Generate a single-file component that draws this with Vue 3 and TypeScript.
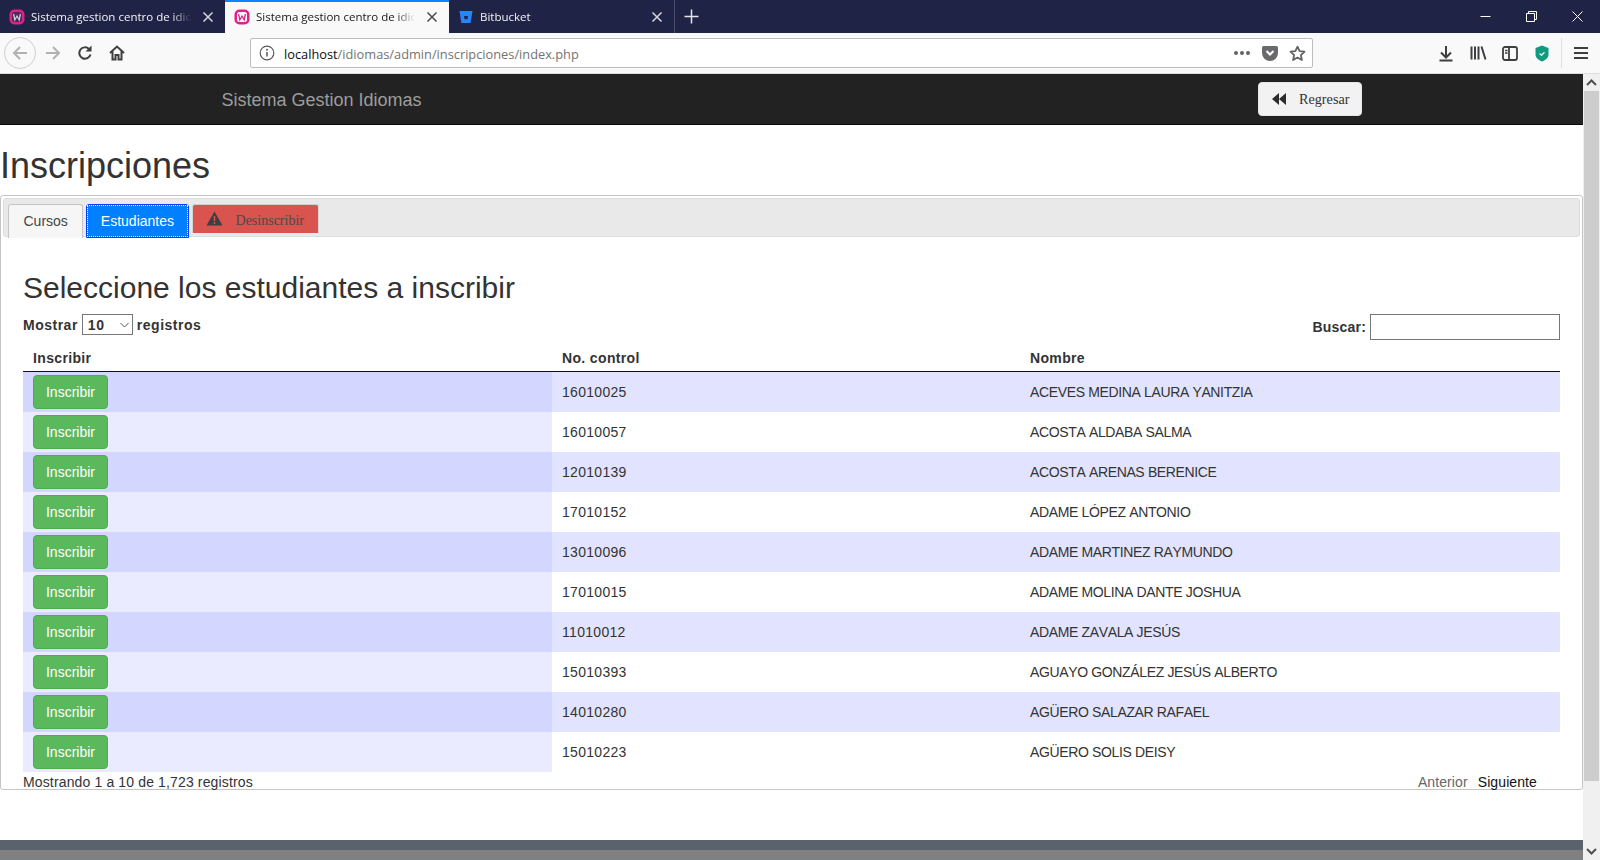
<script setup lang="ts">
const tabs = [
  { title: 'Sistema gestion centro de idiomas', icon: 'wamp', active: false },
  { title: 'Sistema gestion centro de idiomas', icon: 'wamp', active: true },
  { title: 'Bitbucket', icon: 'bitbucket', active: false },
];

const rows = [
  ['16010025', 'ACEVES MEDINA LAURA YANITZIA'],
  ['16010057', 'ACOSTA ALDABA SALMA'],
  ['12010139', 'ACOSTA ARENAS BERENICE'],
  ['17010152', 'ADAME LÓPEZ ANTONIO'],
  ['13010096', 'ADAME MARTINEZ RAYMUNDO'],
  ['17010015', 'ADAME MOLINA DANTE JOSHUA'],
  ['11010012', 'ADAME ZAVALA JESÚS'],
  ['15010393', 'AGUAYO GONZÁLEZ JESÚS ALBERTO'],
  ['14010280', 'AGÜERO SALAZAR RAFAEL'],
  ['15010223', 'AGÜERO SOLIS DEISY'],
];
</script>

<template>
  <div class="browser">
    <div class="tabstrip">
      <div v-for="(tab, i) in tabs" :key="i" class="tab" :class="{ 'tab--active': tab.active }">
        <svg v-if="tab.icon === 'wamp'" class="favicon" viewBox="0 0 16 16">
          <rect x="0.5" y="0.5" width="15" height="15" rx="5" fill="#e0218a" />
          <rect x="3" y="3" width="10" height="10" rx="2.5" :fill="tab.active ? '#fff' : '#4a2a5c'" />
          <path d="M4.6 5l1.2 6 2.2-4 2.2 4 1.2-6" fill="none" :stroke="tab.active ? '#e0218a' : '#d8c8dc'" stroke-width="1.3" />
        </svg>
        <svg v-else class="favicon" viewBox="0 0 16 16">
          <path d="M1.5 2h13l-1.9 12H3.4z" fill="#2684ff" />
          <path d="M6 7h4l-.6 3.2H6.6z" fill="#1f2447" />
        </svg>
        <span class="tab__title">{{ tab.title }}</span>
        <svg class="tab__close" viewBox="0 0 12 12">
          <path d="M1.5 1.5l9 9M10.5 1.5l-9 9" fill="none" stroke="currentColor" stroke-width="1.5" />
        </svg>
      </div>
      <div class="newtab">
        <svg width="15" height="15" viewBox="0 0 15 15">
          <path d="M7.5 0.5v14M0.5 7.5h14" stroke="#e4e5ea" stroke-width="1.5" fill="none" />
        </svg>
      </div>
      <div class="winctl">
        <span class="winctl__btn">
          <svg width="11" height="11" viewBox="0 0 11 11"><path d="M0.5 5.5h10" stroke="#fff" /></svg>
        </span>
        <span class="winctl__btn">
          <svg width="11" height="11" viewBox="0 0 11 11">
            <path d="M0.5 2.5h8v8h-8zM2.5 2.5v-2h8v8h-2" fill="none" stroke="#fff" />
          </svg>
        </span>
        <span class="winctl__btn">
          <svg width="11" height="11" viewBox="0 0 11 11"><path d="M0.5 0.5l10 10M10.5 0.5l-10 10" stroke="#fff" /></svg>
        </span>
      </div>
    </div>

    <div class="toolbar">
      <span class="backbtn">
        <svg width="18" height="18" viewBox="0 0 18 18">
          <path d="M16 9H3M9 3L3 9l6 6" fill="none" stroke="#b1b1b3" stroke-width="2" />
        </svg>
      </span>
      <svg class="tool tool--fwd" width="18" height="18" viewBox="0 0 18 18">
        <path d="M2 9h13M9 3l6 6-6 6" fill="none" stroke="#b1b1b3" stroke-width="2" />
      </svg>
      <svg class="tool tool--reload" width="16" height="16" viewBox="0 0 16 16">
        <path d="M13.5 9.5A5.7 5.7 0 1 1 12 4" fill="none" stroke="#3f3f41" stroke-width="2" />
        <path d="M14.5 0.5v6h-6z" fill="#3f3f41" />
      </svg>
      <svg class="tool tool--home" width="16" height="16" viewBox="0 0 16 16">
        <path d="M1 8l7-6.5L15 8M3.5 6.5V14.500h3V10h3v4.500h3V6.500" fill="none" stroke="#3f3f41" stroke-width="2" />
      </svg>
      <div class="urlbar">
        <svg class="urlbar__info" width="16" height="16" viewBox="0 0 16 16">
          <circle cx="8" cy="8" r="6.8" fill="none" stroke="#5a5a5c" stroke-width="1.2" />
          <path d="M8 7v4.500" stroke="#5a5a5c" stroke-width="1.5" />
          <circle cx="8" cy="4.800" r="1" fill="#5a5a5c" />
        </svg>
        <span class="urlbar__text"><b>localhost</b>/idiomas/admin/inscripciones/index.php</span>
        <span class="urlbar__dots"><i /><i /><i /></span>
        <svg class="urlbar__pocket" width="16" height="15" viewBox="0 0 16 15">
          <path d="M1.500 0h13A1.500 1.500 0 0 1 16 1.500V7a8 8 0 0 1-16 0V1.500A1.500 1.500 0 0 1 1.500 0z" fill="#6a6a6c" />
          <path d="M4.500 5L8 8.500 11.500 5" fill="none" stroke="#fff" stroke-width="2" />
        </svg>
        <svg class="urlbar__star" width="17" height="17" viewBox="0 0 17 17">
          <path d="M8.500 1.600l2.100 4.500 4.900.6-3.600 3.400.95 4.900-4.350-2.450L4.150 15l.95-4.900L1.500 6.700l4.900-.6z" fill="none" stroke="#636365" stroke-width="1.800" stroke-linejoin="round" />
        </svg>
      </div>
      <svg class="tool tool--down" width="16" height="17" viewBox="0 0 16 17">
        <path d="M8 1v11M3 7.500l5 5 5-5M1.500 15.500h13" fill="none" stroke="#3f3f41" stroke-width="2" />
      </svg>
      <svg class="tool tool--lib" width="17" height="16" viewBox="0 0 17 16">
        <path d="M1.500 1.500v13M5 1.500v13M8.500 1.500v13M11.500 1.500l4 13" fill="none" stroke="#3f3f41" stroke-width="2" />
      </svg>
      <svg class="tool tool--side" width="16" height="15" viewBox="0 0 16 15">
        <rect x="1" y="1" width="14" height="13" rx="2" fill="none" stroke="#3f3f41" stroke-width="1.800" />
        <path d="M7 1v13" stroke="#3f3f41" stroke-width="1.800" />
        <path d="M3 4.500h2.500M3 7h2.500" stroke="#3f3f41" stroke-width="1.300" />
      </svg>
      <svg class="tool tool--shield" width="14" height="17" viewBox="0 0 14 17">
        <path d="M7 0.500l6.500 2.500v6.500c0 3.500-3 5.500-6.500 7-3.500-1.500-6.500-3.500-6.500-7V3z" fill="#109b80" />
        <path d="M4.500 8.500l2 1.800 3-3" fill="none" stroke="#e4f5f0" stroke-width="1.300" />
      </svg>
      <span class="toolbar__sep" />
      <svg class="tool" width="14" height="12" viewBox="0 0 14 12">
        <path d="M0 1h14M0 6h14M0 11h14" stroke="#3f3f41" stroke-width="2" />
      </svg>
    </div>

    <div class="viewport">
      <div class="page">
        <nav class="navbar">
          <span class="navbar__brand">Sistema Gestion Idiomas</span>
          <button class="navbar__back">
            <svg width="14" height="12" viewBox="0 0 14 12">
              <path d="M7 0v12L0 6zM14 0v12L7 6z" fill="#2c2c2c" />
            </svg>
            <span>Regresar</span>
          </button>
        </nav>

        <h1 class="title">Inscripciones</h1>

        <section class="card">
          <div class="card__tabs">
            <a class="pill">Cursos</a>
            <a class="pill pill--active"><span class="pill__focus">Estudiantes</span></a>
            <a class="pill pill--danger">
              <svg width="17" height="15" viewBox="0 0 17 15">
                <path d="M8.500 0.500L16.500 14.500H0.500z" fill="#3f3f3f" />
                <path d="M8.500 5v5M8.500 11v2" stroke="#d9534f" stroke-width="1.500" />
              </svg>
              <span>Desinscribir</span>
            </a>
          </div>

          <div class="panel">
            <h2 class="subtitle">Seleccione los estudiantes a inscribir</h2>
            <div class="controls">
              <label class="controls__len">
                Mostrar
                <span class="fakeselect">
                  10
                  <svg width="9" height="6" viewBox="0 0 9 6"><path d="M0.500 1l4 4 4-4" fill="none" stroke="#555" /></svg>
                </span>
                registros
              </label>
              <label class="controls__search">
                Buscar:
                <input type="text" />
              </label>
            </div>

            <table class="grid">
              <colgroup>
                <col class="grid__c1" />
                <col class="grid__c2" />
                <col />
              </colgroup>
              <thead>
                <tr>
                  <th>Inscribir</th>
                  <th>No. control</th>
                  <th>Nombre</th>
                </tr>
              </thead>
              <tbody>
                <tr v-for="row in rows" :key="row[0]">
                  <td class="grid__action"><button class="enroll">Inscribir</button></td>
                  <td class="grid__num">{{ row[0] }}</td>
                  <td class="grid__name">{{ row[1] }}</td>
                </tr>
              </tbody>
            </table>

            <div class="pager">
              <span class="pager__info">Mostrando 1 a 10 de 1,723 registros</span>
              <span class="pager__links">
                <span class="pager__off">Anterior</span>
                <span class="pager__on">Siguiente</span>
              </span>
            </div>
          </div>
        </section>

        <footer class="footer" />
      </div>

      <div class="scrollbar">
        <svg width="11" height="7" viewBox="0 0 11 7"><path d="M1 6l4.500-4.500L10 6" fill="none" stroke="#505050" stroke-width="2" /></svg>
        <div class="scrollbar__thumb" />
        <svg width="11" height="7" viewBox="0 0 11 7"><path d="M1 1l4.500 4.500L10 1" fill="none" stroke="#505050" stroke-width="2" /></svg>
      </div>
    </div>
  </div>
</template>

<style>
html, body {
  margin: 0;
  overflow: hidden;
}
</style>

<style scoped>
.browser {
  width: 1600px;
  height: 860px;
  display: flex;
  flex-direction: column;
  font-family: "Liberation Sans", Arial, sans-serif;
  font-size: 14px;
  color: #333;
  background: #fff;
  overflow: hidden;
}

.tabstrip {
  height: 33px;
  flex: none;
  display: flex;
  background: #1f2447;
  font-family: "Open Sans", "Noto Sans", sans-serif;
  font-size: 11.5px;
  color: #f2f3f7;
}
.tab {
  width: 225px;
  box-sizing: border-box;
  display: flex;
  align-items: center;
  padding: 0 11px 0 9px;
  gap: 6px;
}
.tab--active {
  width: 224px;
  background: #f9f9fa;
  color: #18181a;
  border-top: 2px solid #0a84ff;
  padding-bottom: 2px;
}
.favicon {
  width: 16px;
  height: 16px;
  flex: none;
}
.tab__title {
  flex: 1;
  overflow: hidden;
  white-space: nowrap;
  -webkit-mask-image: linear-gradient(to right, #000 88%, transparent);
  mask-image: linear-gradient(to right, #000 88%, transparent);
}
.tab__close {
  width: 12px;
  height: 12px;
  margin-left: 5px;
  flex: none;
  color: #d6d7de;
}
.tab--active .tab__close {
  color: #4a4a4f;
}
.newtab {
  width: 33px;
  display: flex;
  align-items: center;
  justify-content: center;
  border-left: 1px solid #4a4e6a;
}
.winctl {
  margin-left: auto;
  display: flex;
}
.winctl__btn {
  width: 46px;
  display: flex;
  align-items: center;
  justify-content: center;
  padding-bottom: 1px;
}

.toolbar {
  height: 40px;
  flex: none;
  display: flex;
  align-items: center;
  background: #f9f9fa;
  border-bottom: 1px solid #dcdcdd;
  box-sizing: content-box;
}
.backbtn {
  width: 32px;
  height: 32px;
  margin-left: 4px;
  box-sizing: border-box;
  border: 1px solid #cfcfd0;
  border-radius: 50%;
  display: flex;
  align-items: center;
  justify-content: center;
}
.tool {
  flex: none;
}
.tool--fwd { margin-left: 8px; }
.tool--reload { margin-left: 15px; }
.tool--home { margin-left: 16px; }
.urlbar {
  width: 1063px;
  height: 30px;
  margin-left: 125px;
  box-sizing: border-box;
  background: #fff;
  border: 1px solid #bdbdbe;
  border-radius: 2px;
  display: flex;
  align-items: center;
  font-family: "Open Sans", "Noto Sans", sans-serif;
  font-size: 12.8px;
  color: #737373;
}
.urlbar__info { margin-left: 8px; }
.urlbar__text { margin-left: 9px; flex: 1; padding-top: 1px; }
.urlbar__text b { font-weight: 400; color: #0c0c0d; }
.urlbar__dots {
  display: flex;
  gap: 2px;
}
.urlbar__dots i {
  width: 4px;
  height: 4px;
  border-radius: 50%;
  background: #636365;
}
.urlbar__pocket { margin-left: 12px; }
.urlbar__star { margin: 0 6px 0 11px; }
.tool--down { margin-left: 125px; }
.tool--lib { margin-left: 16px; }
.tool--side { margin-left: 15px; }
.tool--shield { margin-left: 17px; }
.toolbar__sep {
  width: 1px;
  height: 30px;
  background: #e0e0e1;
  margin: 0 12px 0 12px;
}

.viewport {
  flex: 1;
  min-height: 0;
  display: flex;
}
.page {
  width: 1583px;
  flex: none;
  display: flex;
  flex-direction: column;
}

.navbar {
  height: 50px;
  flex: none;
  display: flex;
  align-items: center;
  justify-content: space-between;
  background: #222;
  border-bottom: 1px solid #080808;
  padding: 0 221px 0 221.5px;
}
.navbar__brand {
  font-size: 18px;
  color: #9d9d9d;
  padding-top: 2px;
}
.navbar__back {
  width: 104px;
  height: 34px;
  margin: 0;
  display: flex;
  align-items: center;
  gap: 13px;
  padding: 0 0 0 13px;
  background: #f2f2f2;
  border: 1px solid #e6e6e6;
  border-radius: 4px;
  font-family: "Liberation Serif", serif;
  font-size: 14.2px;
  color: #333;
}
.navbar__back span {
  padding-top: 1px;
}

.title {
  margin: 21px 0 9px 0;
  font-size: 36px;
  font-weight: 400;
  line-height: 40px;
}

.card {
  width: 1583px;
  height: 595px;
  box-sizing: border-box;
  border: 1px solid #c5c5c5;
  border-radius: 3px;
  padding: 2px;
  flex: none;
}
.card__tabs {
  height: 39px;
  box-sizing: border-box;
  display: flex;
  align-items: flex-start;
  gap: 3px;
  padding: 5px 0 0 4px;
  background: #e9e9e9;
  border: 1px solid #ddd;
  border-radius: 3px;
}
.pill {
  height: 34px;
  box-sizing: border-box;
  display: flex;
  align-items: center;
  padding: 0 14.5px 2px;
  background: #f6f6f6;
  border: 1px solid #c5c5c5;
  border-bottom: 0;
  border-radius: 3px 3px 0 0;
  color: #454545;
}
.pill--active {
  padding: 0;
  background: #007fff;
  border: 1px solid #003eff;
  color: #fff;
}
.pill__focus {
  height: 100%;
  display: flex;
  align-items: center;
  padding: 0 12.5px 1px;
  border: 1px dotted #fff;
  box-sizing: border-box;
}
.pill--danger {
  height: 29px;
  width: 127px;
  padding: 0 0 0 13px;
  gap: 13px;
  background: #d9534f;
  border: 1px solid #d5d5d5;
  border-top-color: #cfcfcf;
  border-bottom: 0;
  font-family: "Liberation Serif", serif;
  font-size: 14px;
  color: #4a4a4a;
}
.pill--danger svg {
  margin-bottom: 2px;
}
.pill--danger span {
  padding-top: 4px;
}

.panel {
  padding: 0 20px;
}
.subtitle {
  margin: 34px 0 10px;
  font-size: 30px;
  font-weight: 400;
  line-height: 33px;
}
.controls {
  display: flex;
  justify-content: space-between;
  align-items: flex-start;
  height: 26px;
  font-weight: 700;
  letter-spacing: 0.5px;
}
.controls__len {
  display: flex;
  align-items: center;
  height: 21px;
  gap: 4px;
}
.fakeselect {
  width: 51px;
  height: 21px;
  box-sizing: border-box;
  display: flex;
  align-items: center;
  justify-content: space-between;
  padding: 0 3px 0 5px;
  border: 1px solid #767676;
  background: #fff;
  font-weight: 700;
}
.controls__search {
  display: flex;
  align-items: center;
  gap: 4px;
  letter-spacing: 0.2px;
}
.controls__search input {
  width: 190px;
  height: 26px;
  box-sizing: border-box;
  margin: 0;
  border: 1px solid #767676;
  background: #fff;
}

.grid {
  width: 1537px;
  table-layout: fixed;
  border-collapse: separate;
  border-spacing: 0;
}
.grid__c1 { width: 529px; }
.grid__c2 { width: 468px; }
.grid th {
  height: 32px;
  padding: 5px 10px 0;
  box-sizing: border-box;
  text-align: left;
  font-weight: 700;
  letter-spacing: 0.35px;
  border-bottom: 1px solid #111;
}
.grid td {
  height: 40px;
  padding: 0 10px;
  box-sizing: border-box;
}
.grid__num { letter-spacing: 0.3px; }
.grid__name { font-kerning: none; letter-spacing: -0.36px; }
.grid tbody tr:nth-child(odd) td { background: #e2e4ff; }
.grid tbody tr:nth-child(odd) td.grid__action { background: #d3d6ff; }
.grid tbody tr:nth-child(even) td { background: #fff; }
.grid tbody tr:nth-child(even) td.grid__action { background: #eaebff; }
.enroll {
  width: 75px;
  height: 34px;
  display: block;
  padding: 0;
  background: #5cb85c;
  border: 1px solid #4cae4c;
  border-radius: 4px;
  font-family: "Liberation Sans", Arial, sans-serif;
  font-size: 14px;
  color: #fff;
}

.pager {
  display: flex;
  justify-content: space-between;
  line-height: 20px;
}
.pager__info { letter-spacing: 0.14px; }
.pager__links {
  display: flex;
  gap: 10px;
  padding-right: 23px;
  letter-spacing: 0.1px;
}
.pager__off { color: #666; }
.pager__on { color: #111; }

.footer {
  margin-top: 50px;
  height: 10px;
  flex: none;
  background: #5a636b;
  box-shadow: 0 10px 0 #808080;
}

.scrollbar {
  width: 17px;
  flex: none;
  display: flex;
  flex-direction: column;
  align-items: center;
  background: #f0f0f0;
  padding: 5px 0;
  box-sizing: border-box;
}
.scrollbar__thumb {
  width: 15px;
  height: 690px;
  margin: 5px 0 auto;
  background: #cdcdcd;
}
</style>
